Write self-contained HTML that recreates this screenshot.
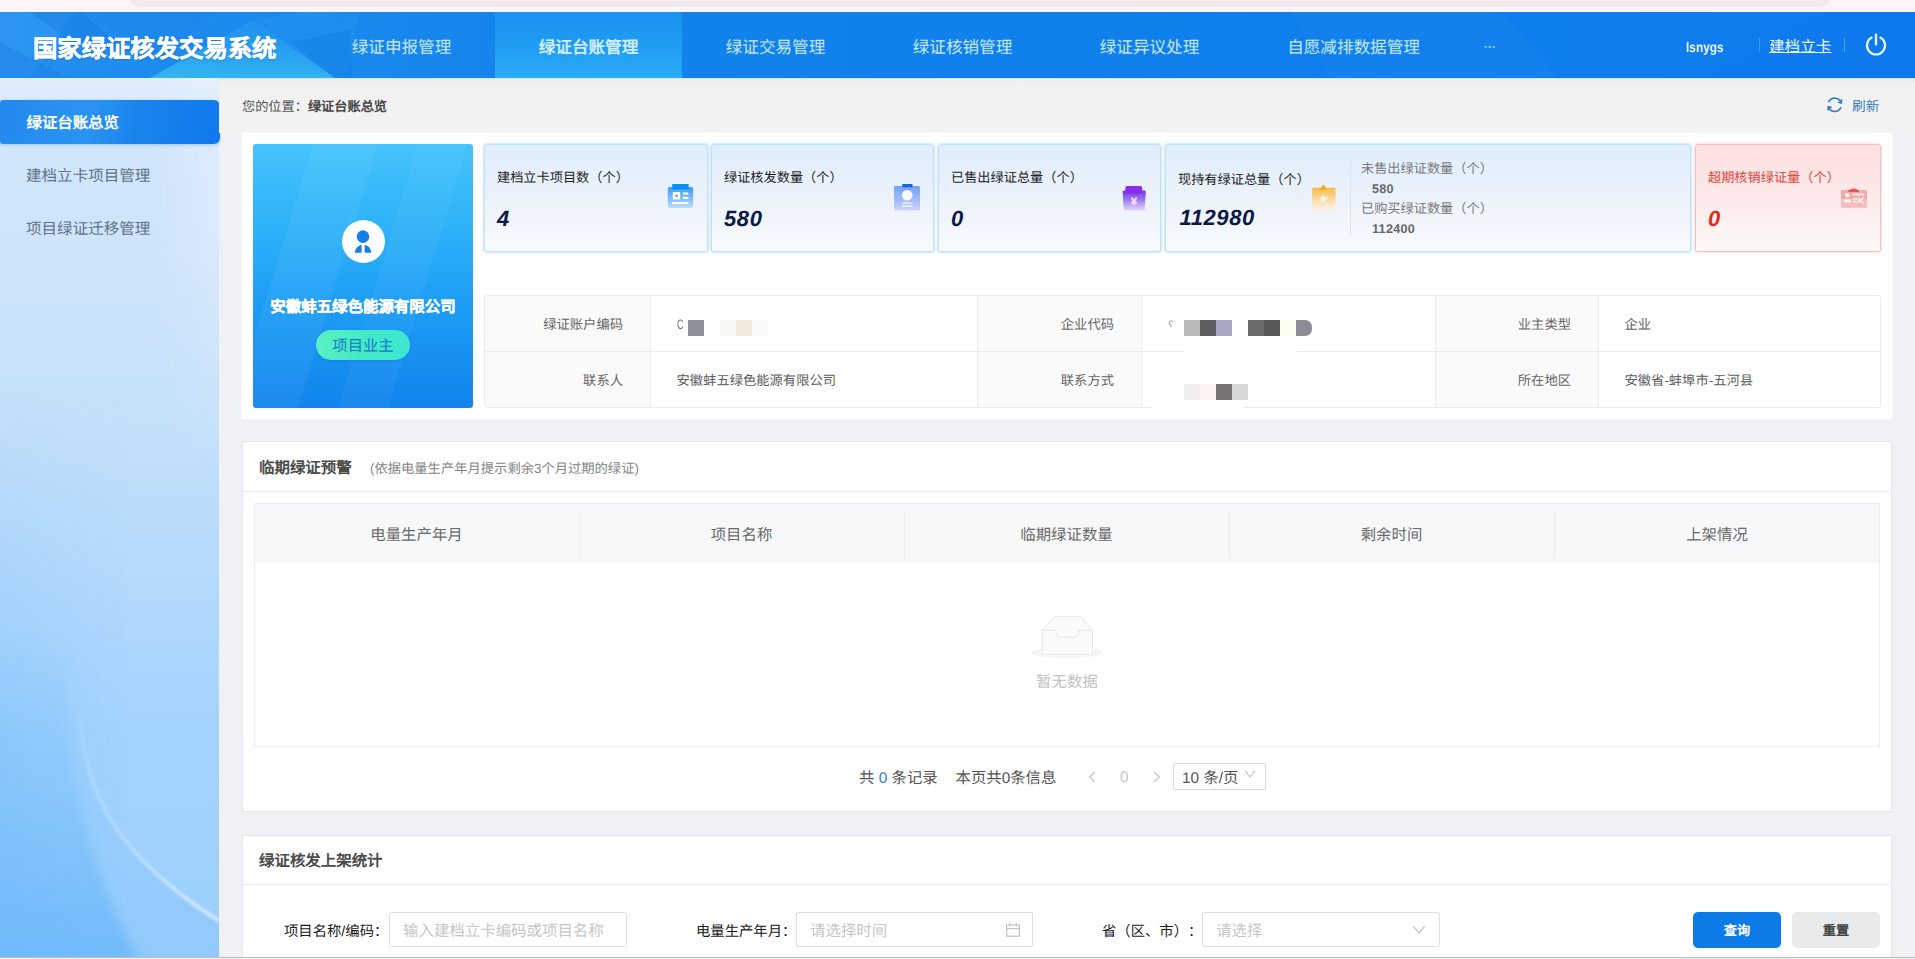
<!DOCTYPE html>
<html lang="zh-CN">
<head>
<meta charset="utf-8">
<title>国家绿证核发交易系统</title>
<style>
*{box-sizing:border-box;margin:0;padding:0}
html,body{width:1915px;height:959px;overflow:hidden}
body{font-family:"Liberation Sans",sans-serif;font-size:14px;color:#333;background:#f0f1f5;position:relative;text-rendering:geometricPrecision;text-spacing-trim:space-all;font-feature-settings:"chws" 0,"halt" 0}
.abs{position:absolute}
svg{position:absolute;overflow:visible}
/* top strip */
#topstrip{left:0;top:0;width:1915px;height:12px;background:#fbf5f7}
#topstrip i{position:absolute;left:129px;top:-6px;width:1702px;height:11px;background:#f3e9ed;border-radius:0 0 14px 14px;box-shadow:0 1px 2px rgba(200,180,190,.35)}
/* header */
#hdr{left:0;top:12px;width:1915px;height:66px;background:linear-gradient(90deg,#2390f0 0%,#1b89ee 14%,#1383ec 30%,#0f80ec 55%,#0e7bee 100%);overflow:hidden}
#hdrline{left:0;top:78px;width:1915px;height:1px;background:#d3e8fa}
#hdr .title{left:33px;top:2px;height:66px;line-height:71px;-webkit-text-stroke:.45px #fff;font-size:24.35px;font-weight:bold;color:#fff;white-space:nowrap;text-shadow:0 1px 2px rgba(0,70,150,.35)}
.nav{top:0;height:66px;line-height:72px;font-size:16.6px;color:#c6e9ff;text-align:center;white-space:nowrap}
.nav.act{background:linear-gradient(180deg,#1a92f1 0%,#1f9cf3 50%,#2cabf6 100%);color:#cfeeff;font-weight:bold}
.hr{top:0;height:66px;white-space:nowrap;color:#eef8ff}
/* sidebar */
#side{left:0;top:78px;width:219px;height:879px;background:linear-gradient(180deg,#d4e7fb 0%,#cfe4fa 20%,#c3e0fb 40%,#b2d9fc 58%,#a4d3fd 74%,#9ccffc 100%);overflow:hidden}
#side .glow{left:0;top:300px;width:219px;height:579px;background:linear-gradient(90deg,rgba(100,178,248,.22) 0%,rgba(110,184,250,.1) 35%,rgba(120,190,250,0) 60%);-webkit-mask-image:linear-gradient(180deg,transparent 0%,#000 60%);mask-image:linear-gradient(180deg,transparent 0%,#000 60%)}
#sact{left:0;top:100px;width:220px;height:44px;background:linear-gradient(100deg,#2189ee 0%,#2a93f2 40%,#1a84ee 62%,#0f78ec 100%);border-radius:3px 6px 6px 3px;color:#fff;font-weight:bold;font-size:15.4px;line-height:48px;padding-left:26.5px;white-space:nowrap;box-shadow:0 1px 3px rgba(30,120,220,.3)}
.sit{left:26px;font-size:15.55px;color:#5f7388;white-space:nowrap;line-height:20px}
.panel{background:#fff;border:1px solid #e3e6eb}
#bc{left:242px;top:99px;font-size:13.2px;color:#555;white-space:nowrap;line-height:16px}
#bc b{color:#484848}
#refresh{left:1852px;top:98.5px;font-size:13.7px;color:#3b7db6;line-height:16px;white-space:nowrap}
#p1{left:242px;top:132.5px;width:1650px;height:286px;background:#fff;box-shadow:0 0 2px rgba(255,255,255,.9)}
#band{left:219px;top:79px;width:1696px;height:54px;background:linear-gradient(180deg,#ececee 0,#f2f2f3 5px,#f2f2f3 100%)}
#bluecard{left:253px;top:144px;width:220px;height:264px;border-radius:3px;background:linear-gradient(180deg,#45c3fc 0%,#2fb3f9 30%,#1d9ef5 60%,#1184ee 100%);overflow:hidden}
#bluecard .av{left:88.7px;top:76.3px;width:43px;height:43px;border-radius:50%;background:#fdfeff}
#bluecard .nm{left:0;top:154px;width:220px;text-align:center;color:#fff;font-weight:bold;font-size:15.45px;line-height:20px;white-space:nowrap;-webkit-text-stroke:.3px #fff}
#bluecard .tag{left:63px;top:186px;width:94px;height:30px;border-radius:15px;background:linear-gradient(100deg,#5cf0c4 0%,#43eac4 50%,#3ee6d2 100%);color:#1577cc;font-size:15.35px;line-height:33px;text-align:center;box-shadow:0 1px 3px rgba(0,90,180,.25)}
.sc{top:144px;height:108px;border:1px solid #c4e1f3;border-radius:3px;background:linear-gradient(180deg,#dfeefc 0%,#e8f1fc 35%,#f0f4fc 65%,#f8fbfe 100%);box-shadow:0 0 2px 1px rgba(170,212,242,.55)}
.sc .lb{left:12px;top:24px;font-size:13.2px;color:#1e1e1e;white-space:nowrap;line-height:18px}
.sc .vl{left:12px;top:59px;font-size:22px;font-weight:bold;font-style:italic;color:#0c1a45;line-height:30px;white-space:nowrap;letter-spacing:.6px}
.sc.red{border-color:#f2c2c2;background:linear-gradient(180deg,#fddfe0 0%,#fde7e7 40%,#fef1f1 75%,#fff8f8 100%);box-shadow:0 0 2px 1px rgba(243,185,185,.45)}
.sc.red .lb{color:#dd473d}
.sc.red .vl{color:#dc2c20}
.sub{font-size:13.2px;color:#7a7a7a;white-space:nowrap;line-height:18px}
.subv{font-size:12.6px;color:#666;font-weight:bold;white-space:nowrap;line-height:18px;letter-spacing:.3px}
#vsep{left:1350px;top:160px;width:1px;height:75px;background:#dbe6ef}
#info{left:484px;top:295px;width:1397px;height:113px;border:1px solid #e9ebee;border-radius:3px;background:#fff;overflow:hidden}
#info .lab{background:#fafafa;color:#666;font-size:13.3px;text-align:right;padding-right:27px;height:56px;line-height:57px;white-space:nowrap;border-right:1px solid #ebedf0}
#info .val{color:#5e5e5e;font-size:13.3px;height:56px;line-height:57px;white-space:nowrap;padding-left:25.5px}
#info .hl{left:0;top:55px;width:1395px;height:1px;background:#e9ebee}
.mz{position:absolute}
#p2{left:242px;top:441px;width:1650px;height:371px}
#p3{left:242px;top:835px;width:1650px;height:130px}
.ptitle{font-size:15.45px;font-weight:bold;color:#4c4c4c;white-space:nowrap;line-height:20px}
.pnote{font-size:13.3px;color:#858585;white-space:nowrap;line-height:20px}
.hline{height:1px;background:#e9ebee}
#tbl{left:254px;top:503px;width:1626px;height:244px;border:1px solid #ebeef2;background:#fff}
#thead{left:255px;top:504px;width:1624px;height:59px;background:#f7f8fa}
.th{top:504px;height:59px;line-height:64px;text-align:center;font-size:15.4px;color:#6a6a6a;white-space:nowrap}
.vdiv{top:511px;width:1px;height:48px;background:#eceff3}
#nodata{left:1017px;top:674px;width:100px;text-align:center;font-size:15.45px;color:#c2c2c2;line-height:18px;white-space:nowrap}
.pg{top:769px;font-size:15.4px;color:#555;line-height:20px;white-space:nowrap}
#pgsel{left:1173px;top:763px;width:93px;height:27px;border:1px solid #d9d9d9;border-radius:2px;background:#fff;font-size:15.4px;color:#555;line-height:29px;padding-left:8px;white-space:nowrap}
.flab{top:922px;font-size:14.35px;color:#1a1a1a;line-height:20px;white-space:nowrap;font-weight:500}
.finp{top:912px;height:35px;width:238px;border:1px solid #dfdfdf;border-radius:2px;background:#fff;font-size:15.45px;color:#c6c6c6;line-height:37px;padding-left:13px;white-space:nowrap}
.btn{top:912px;width:88px;height:36px;border-radius:5px;font-size:13.2px;font-weight:bold;line-height:37px;text-align:center}
#botline{left:0;top:957px;width:1915px;height:2px;background:linear-gradient(180deg,#bcbec1 0,#bcbec1 1px,#f1f1f1 1px)}
</style>
</head>
<body>
<div id="topstrip" class="abs"><i></i></div>
<div id="hdr" class="abs">
  <svg width="1915" height="66" style="left:0;top:0" viewBox="0 0 1915 66">
    <defs><linearGradient id="hg1" x1="0" y1="0" x2="0" y2="1"><stop offset="0" stop-color="#2aa6f2" stop-opacity=".25"/><stop offset="1" stop-color="#3cc2f3" stop-opacity=".75"/></linearGradient></defs>
    <polygon points="0,0 75,0 30,66 0,66" fill="#3aa0f5" opacity=".4"/>
    <polygon points="30,0 80,0 130,40 70,30" fill="#0f70dc" opacity=".3"/>
    <polygon points="0,30 70,66 0,66" fill="#1478e0" opacity=".3"/>
    <polygon points="80,0 215,0 160,50" fill="#1a7fe6" opacity=".2"/>
    <polygon points="253,8 335,66 150,66" fill="url(#hg1)"/>
    <polygon points="253,8 300,0 360,0 345,66 335,66" fill="#2a9cf2" opacity=".3"/>
    <polygon points="290,30 350,18 352,66 335,66" fill="#0c72de" opacity=".28"/>
    <polygon points="352,0 440,0 400,66 346,66" fill="#1f8ef0" opacity=".2"/>
    <polygon points="1290,0 1500,0 1560,66 1330,66" fill="#1f8af0" opacity=".25"/>
    <polygon points="1830,0 1915,0 1915,66 1700,66" fill="#0a74ea" opacity=".25"/>
  </svg>
  <div class="abs title">国家绿证核发交易系统</div>
  <div class="abs nav" style="left:308px;width:187px">绿证申报管理</div>
  <div class="abs nav act" style="left:495px;width:187px">绿证台账管理</div>
  <div class="abs nav" style="left:682px;width:187px">绿证交易管理</div>
  <div class="abs nav" style="left:869px;width:187px">绿证核销管理</div>
  <div class="abs nav" style="left:1056px;width:187px">绿证异议处理</div>
  <div class="abs nav" style="left:1243px;width:221px">自愿减排数据管理</div>
  <div class="abs nav" style="left:1478px;width:24px;font-size:12px;font-weight:bold;line-height:70px;letter-spacing:0;color:#9fd6ff">···</div>
  <div class="abs hr" style="left:1686px;font-size:14px;line-height:71px;font-weight:bold;transform:scaleX(.85);transform-origin:0 50%">lsnygs</div>
  <div class="abs" style="left:1759px;top:26px;width:1px;height:14px;background:#3f9df3"></div>
  <div class="abs hr" style="left:1769px;font-size:15.6px;line-height:72px;text-decoration:underline;text-underline-offset:0px">建档立卡</div>
  <div class="abs" style="left:1844px;top:26px;width:1px;height:14px;background:#4aa5f4"></div>
  <svg width="24" height="24" style="left:1864px;top:21px" viewBox="0 0 24 24" fill="none" stroke="#e2f5ff" stroke-width="2.3" stroke-linecap="round">
    <path d="M7.6 4.6 A9 9 0 1 0 16.4 4.6"/>
    <path d="M12 1.6 V11.5"/>
  </svg>
</div>
<div id="hdrline" class="abs"></div>
<div id="side" class="abs">
  <div class="abs glow"></div>
  <div class="abs" style="left:0;top:0;width:219px;height:36px;background:linear-gradient(180deg,rgba(255,255,255,.32),rgba(255,255,255,0))"></div>
  <div class="abs" style="left:150px;top:0;width:69px;height:420px;background:linear-gradient(90deg,rgba(255,255,255,0),rgba(255,255,255,.22));-webkit-mask-image:linear-gradient(180deg,#000 40%,transparent);mask-image:linear-gradient(180deg,#000 40%,transparent)"></div>
  <svg width="219" height="879" style="left:0;top:0" viewBox="0 0 219 879" fill="none">
    <defs>
      <linearGradient id="arcg" x1="0" y1="0" x2="0" y2="1"><stop offset="0" stop-color="#fff" stop-opacity="0"/><stop offset=".35" stop-color="#fff" stop-opacity=".18"/><stop offset=".7" stop-color="#fff" stop-opacity=".3"/><stop offset="1" stop-color="#fff" stop-opacity=".75"/></linearGradient>
      <linearGradient id="arcf" x1="0" y1="0" x2="0" y2="1"><stop offset="0" stop-color="#7fc0fb" stop-opacity="0"/><stop offset=".5" stop-color="#7fc0fb" stop-opacity=".2"/><stop offset="1" stop-color="#7fc0fb" stop-opacity=".4"/></linearGradient>
      <linearGradient id="arcd" x1="0" y1="0" x2="0" y2="1"><stop offset="0" stop-color="#60b1f8" stop-opacity="0"/><stop offset=".45" stop-color="#62b6fa" stop-opacity=".25"/><stop offset="1" stop-color="#5cb3fa" stop-opacity=".6"/></linearGradient>
      <filter id="bl" x="-20%" y="-20%" width="140%" height="140%"><feGaussianBlur stdDeviation="1.4"/></filter>
      <filter id="bl2" x="-20%" y="-20%" width="140%" height="140%"><feGaussianBlur stdDeviation="5"/></filter>
    </defs>
    <path d="M80 620 C 78 715, 120 780, 219 843 L219 879 L0 879 L0 620 Z" fill="url(#arcf)"/>
    <path d="M66 560 C 62 690, 88 790, 142 889 L-10 889 L-10 560 Z" fill="url(#arcd)" filter="url(#bl2)"/>
    <path d="M80 620 C 78 715, 120 780, 219 843" stroke="url(#arcg)" stroke-width="3.2" filter="url(#bl)"/>
  </svg>
</div>
<div id="sact" class="abs">绿证台账总览</div>
<div class="abs sit" style="top:167px">建档立卡项目管理</div>
<div class="abs sit" style="top:220px">项目绿证迁移管理</div>
<div id="band" class="abs"></div>
<div id="bc" class="abs">您的位置：<b>绿证台账总览</b></div>
<svg width="17.6" height="17.6" style="left:1826.2px;top:95.5px" viewBox="0 0 16 16" fill="none" stroke="#3b7db6" stroke-width="1.5" stroke-linecap="round" stroke-linejoin="round">
  <path d="M13.9 6.2 A6.2 6.2 0 0 0 2.6 5.2"/>
  <path d="M2.1 9.8 A6.2 6.2 0 0 0 13.4 10.8"/>
  <path d="M14.2 3.6 L13.9 6.2 L11.4 5.7" />
  <path d="M1.8 12.4 L2.1 9.8 L4.6 10.3" />
</svg>
<div id="refresh" class="abs">刷新</div>
<div id="p1" class="abs"></div>
<div id="bluecard" class="abs">
  <svg width="220" height="264" style="left:0;top:0" viewBox="0 0 220 264">
    <polygon points="60,0 125,0 45,264 -20,264" fill="#fff" opacity=".05"/>
    <polygon points="165,0 215,0 135,264 85,264" fill="#fff" opacity=".04"/>
  </svg>
  <div class="abs av"></div>
  <svg width="44" height="44" style="left:88px;top:76px" viewBox="0 0 44 44">
    <circle cx="22" cy="16.6" r="6.3" fill="#1780e8"/>
    <path d="M13.9 32.8 C14.5 28 17 25.6 20.6 25.1 L20.6 32.8 Z" fill="#1780e8"/>
    <path d="M30.3 32.8 C29.7 28 27.2 25.6 23.6 25.1 L23.6 32.8 Z" fill="#1780e8"/>
  </svg>
  <div class="abs nm">安徽蚌五绿色能源有限公司</div>
  <div class="abs tag">项目业主</div>
</div>
<div class="abs sc" style="left:484px;width:224px"><div class="abs lb">建档立卡项目数（个）</div><div class="abs vl">4</div></div>
<div class="abs sc" style="left:711px;width:223px"><div class="abs lb">绿证核发数量（个）</div><div class="abs vl">580</div></div>
<div class="abs sc" style="left:938px;width:223px"><div class="abs lb">已售出绿证总量（个）</div><div class="abs vl">0</div></div>
<div class="abs sc" style="left:1165px;width:526px">
  <div class="abs lb" style="top:26px">现持有绿证总量（个）</div><div class="abs vl" style="top:58px;left:13.5px">112980</div>
  <div class="abs sub" style="left:195px;top:15px">未售出绿证数量（个）</div>
  <div class="abs subv" style="left:206px;top:35px">580</div>
  <div class="abs sub" style="left:195px;top:55px">已购买绿证数量（个）</div>
  <div class="abs subv" style="left:206px;top:75px">112400</div>
</div>
<div class="abs sc red" style="left:1695px;width:186px"><div class="abs lb" style="left:12px">超期核销绿证量（个）</div><div class="abs vl" style="left:12px">0</div></div>
<div id="vsep" class="abs"></div>
<!-- stat icons -->
<svg width="30" height="30" style="left:666px;top:182px" viewBox="0 0 30 30">
  <defs><linearGradient id="g1" x1="0" y1="0" x2="0" y2="1"><stop offset="0" stop-color="#3a9ff0"/><stop offset=".6" stop-color="#86c1f7"/><stop offset="1" stop-color="#c2dcfb"/></linearGradient></defs>
  <rect x="1.8" y="5" width="25.4" height="21" rx="2" fill="url(#g1)"/>
  <rect x="6.2" y="2" width="16.4" height="5.5" fill="#0d8fef"/>
  <rect x="6.8" y="10" width="7.4" height="7.4" fill="#fff"/><rect x="9.6" y="12.8" width="1.9" height="1.9" fill="#3d7bc0"/>
  <rect x="17" y="10.4" width="5.3" height="2.2" fill="#fff"/><rect x="17" y="14.8" width="5.3" height="2.2" fill="#fff"/>
  <rect x="6" y="20" width="16.4" height="2" fill="#fff" opacity=".95"/>
</svg>
<svg width="30" height="30" style="left:892px;top:182px" viewBox="0 0 30 30">
  <defs><linearGradient id="g2" x1="0" y1="0" x2="0" y2="1"><stop offset="0" stop-color="#76a2f4"/><stop offset=".6" stop-color="#a5bdf7"/><stop offset="1" stop-color="#ccd5fb"/></linearGradient></defs>
  <rect x="2" y="4" width="26" height="24.6" rx="1.5" fill="url(#g2)"/>
  <rect x="10.2" y="2" width="10.3" height="3.2" rx=".6" fill="#1765d8"/>
  <circle cx="15.2" cy="13.3" r="5.3" fill="#fafbff"/>
  <rect x="10" y="20.4" width="10.5" height="1.3" fill="#f1f4ff"/><rect x="10" y="23.3" width="10.5" height="1.6" fill="#f1f4ff"/>
</svg>
<svg width="30" height="30" style="left:1120px;top:184px" viewBox="0 0 30 30">
  <defs><linearGradient id="g3" x1="0" y1="0" x2="0" y2="1"><stop offset="0" stop-color="#7437e6"/><stop offset=".45" stop-color="#9a78f0"/><stop offset="1" stop-color="#dccffc" stop-opacity=".85"/></linearGradient></defs>
  <path d="M2.6 8.5 Q2.2 6.6 4 6.6 L24.4 6.6 Q26.2 6.6 25.8 8.5 L24.6 25 Q24.5 26.6 23 26.6 L5.4 26.6 Q3.9 26.6 3.8 25 Z" fill="url(#g3)"/>
  <rect x="5.3" y="2" width="17" height="7.4" rx="2" fill="#8a2be8"/>
  <text x="13.8" y="21.2" font-size="10.5" font-weight="bold" fill="#fbd9fb" stroke="#fbd9fb" stroke-width=".5" text-anchor="middle" font-family="Liberation Sans, sans-serif">¥</text>
</svg>
<svg width="30" height="32" style="left:1310px;top:182px" viewBox="0 0 30 32">
  <defs><linearGradient id="g4" x1="0" y1="0" x2="0" y2="1"><stop offset="0" stop-color="#f8bd45"/><stop offset=".45" stop-color="#fbd79a"/><stop offset="1" stop-color="#fdeedd" stop-opacity=".6"/></linearGradient></defs>
  <rect x="2.2" y="5.8" width="23.4" height="23.4" rx="1" fill="url(#g4)"/>
  <polygon points="13.4,2.6 17.6,7.8 9.2,7.8" fill="#f9a726"/>
  <polygon points="13.4,11.8 14.8,15 18.3,15.3 15.6,17.6 16.5,21 13.4,19.1 10.3,21 11.2,17.6 8.5,15.3 12,15" fill="#fff5dc"/>
</svg>
<svg width="30" height="24" style="left:1840px;top:187px" viewBox="0 0 30 24">
  <rect x="1" y="3" width="26" height="17.5" rx="1" fill="#f3aaaa"/>
  <rect x="1" y="12" width="26" height="8.5" fill="#f7c4c4" opacity=".7"/>
  <path d="M8.4 3.6 Q13.5 -.8 19 3.6 L19 5 L8.4 5 Z" fill="#ef4f5a"/>
  <circle cx="7.3" cy="8.3" r="2.3" fill="#fdeeee"/><rect x="3.6" y="12.2" width="7.6" height="3.4" rx="1.2" fill="#fdeeee"/>
  <rect x="12.6" y="6.6" width="11.6" height="1.8" fill="#fdeeee"/><rect x="13" y="11" width="4.2" height="1.6" fill="#fdeeee"/><rect x="13" y="14" width="4.2" height="1.6" fill="#fdeeee"/>
  <path d="M19 10.6 V16 M23.6 10.6 L20 13.4 L23.8 16" stroke="#fdeeee" stroke-width="1.6" fill="none"/>
</svg>
<div id="info" class="abs">
  <div class="abs lab" style="left:0;top:0;width:166px">绿证账户编码</div>
  <div class="abs lab" style="left:492px;top:0;width:165px;border-left:1px solid #ebedf0">企业代码</div>
  <div class="abs lab" style="left:950px;top:0;width:164px;border-left:1px solid #ebedf0">业主类型</div>
  <div class="abs val" style="left:1114px;top:0">企业</div>
  <div class="abs lab" style="left:0;top:56px;width:166px;height:55px;line-height:58px">联系人</div>
  <div class="abs val" style="left:166px;top:56px;height:55px;line-height:58px">安徽蚌五绿色能源有限公司</div>
  <div class="abs lab" style="left:492px;top:56px;width:165px;height:55px;line-height:58px;border-left:1px solid #ebedf0">联系方式</div>
  <div class="abs lab" style="left:950px;top:56px;width:164px;height:55px;line-height:58px;border-left:1px solid #ebedf0">所在地区</div>
  <div class="abs val" style="left:1114px;top:56px;height:55px;line-height:58px">安徽省-蚌埠市-五河县</div>
  <div class="abs hl"></div>
</div>
<!-- mosaic blocks -->
<div class="mz" style="left:677px;top:318px;font-size:13.5px;color:#777;line-height:13px;transform:scaleX(.68);transform-origin:0 0">C</div>
<div class="mz" style="left:688px;top:320px;width:16px;height:16px;background:#8d9099"></div>
<div class="mz" style="left:720px;top:320px;width:16px;height:16px;background:#f6f8f3"></div>
<div class="mz" style="left:736px;top:320px;width:16px;height:16px;background:#f3ecdc"></div>
<div class="mz" style="left:752px;top:320px;width:16px;height:16px;background:#f8fbfa"></div>
<div class="mz" style="left:1168.5px;top:320px;font-size:9px;color:#888;line-height:9px">ʕ</div>
<div class="mz" style="left:1184px;top:320px;width:16px;height:16px;background:#b9b9b9"></div>
<div class="mz" style="left:1200px;top:320px;width:16px;height:16px;background:#5f5f62"></div>
<div class="mz" style="left:1216px;top:320px;width:16px;height:16px;background:#a7a7c2"></div>
<div class="mz" style="left:1248px;top:320px;width:16px;height:16px;background:#6b6e6a"></div>
<div class="mz" style="left:1264px;top:320px;width:16px;height:16px;background:#5b585b"></div>
<div class="mz" style="left:1280px;top:320px;width:16px;height:16px;background:#fdfdf0"></div>
<div class="mz" style="left:1296px;top:320px;width:16px;height:16px;background:#8d8b96;border-radius:0 7px 7px 0"></div>
<div class="mz" style="left:1184px;top:384px;width:16px;height:16px;background:#f1eeee"></div>
<div class="mz" style="left:1200px;top:384px;width:16px;height:16px;background:#fdf3f3"></div>
<div class="mz" style="left:1216px;top:384px;width:16px;height:16px;background:#777376"></div>
<div class="mz" style="left:1232px;top:384px;width:16px;height:16px;background:#d9d8d6"></div>

<div class="mz" style="left:1185px;top:344px;width:112px;height:14px;background:#fff"></div>
<div class="mz" style="left:1153px;top:400px;width:90px;height:9px;background:#fff"></div>
<div id="p2" class="abs panel"></div>
<div class="abs ptitle" style="left:259px;top:459px">临期绿证预警</div>
<div class="abs pnote" style="left:370px;top:459px">(依据电量生产年月提示剩余3个月过期的绿证)</div>
<div class="abs hline" style="left:243px;top:491px;width:1646px"></div>
<div id="tbl" class="abs"></div>
<div id="thead" class="abs"></div>
<div class="abs th" style="left:254px;width:325px">电量生产年月</div>
<div class="abs th" style="left:579px;width:325px">项目名称</div>
<div class="abs th" style="left:904px;width:325px">临期绿证数量</div>
<div class="abs th" style="left:1229px;width:325px">剩余时间</div>
<div class="abs th" style="left:1554px;width:326px">上架情况</div>
<div class="abs vdiv" style="left:579px"></div><div class="abs vdiv" style="left:904px"></div><div class="abs vdiv" style="left:1229px"></div><div class="abs vdiv" style="left:1554px"></div>
<svg width="80" height="48" style="left:1027px;top:612px" viewBox="0 0 80 48" fill="none">
  <ellipse cx="39.5" cy="40.5" rx="36" ry="5.5" fill="#f5f5f5"/>
  <path d="M15 18.2 L28 4.4 H53 L65.5 18.2 V40.7 Q65.5 42.7 63.5 42.7 H17 Q15 42.7 15 40.7 Z" fill="#fafafa" stroke="#e8e8e8" stroke-width="1"/>
  <path d="M15 18.2 H29 V21.5 Q29 25 32.5 25 H48 Q51.4 25 51.4 21.5 V18.2 H65.5" stroke="#e6e6e6" stroke-width="1" fill="#fcfcfc"/>
</svg>
<div id="nodata" class="abs">暂无数据</div>
<div class="abs pg" style="left:859px">共 <span style="color:#2e7fc9">0</span> 条记录</div>
<div class="abs pg" style="left:955.5px">本页共0条信息</div>
<svg width="10" height="14" style="left:1087px;top:770px" viewBox="0 0 10 14" fill="none" stroke="#c7c7c7" stroke-width="1.3"><path d="M7.8 2 L2.6 7 L7.8 12"/></svg>
<div class="abs pg" style="left:1120px;top:768px;color:#c4c4c4">0</div>
<svg width="10" height="14" style="left:1152px;top:770px" viewBox="0 0 10 14" fill="none" stroke="#c7c7c7" stroke-width="1.3"><path d="M2.2 2 L7.4 7 L2.2 12"/></svg>
<div id="pgsel" class="abs">10 条/页</div>
<svg width="12" height="10" style="left:1244px;top:769px" viewBox="0 0 12 10" fill="none" stroke="#c2c2c2" stroke-width="1.2"><path d="M1.2 1.5 L6 8 L10.8 1.5"/></svg>

<div id="p3" class="abs panel"></div>
<div class="abs ptitle" style="left:259px;top:852px">绿证核发上架统计</div>
<div class="abs hline" style="left:243px;top:884px;width:1646px"></div>
<div class="abs flab" style="left:284px">项目名称/编码：</div>
<div class="abs finp" style="left:389px">输入建档立卡编码或项目名称</div>
<div class="abs flab" style="left:696px">电量生产年月：</div>
<div class="abs finp" style="left:796px;width:237px">请选择时间</div>
<svg width="16" height="16" style="left:1005px;top:922px" viewBox="0 0 16 16" fill="none" stroke="#c4c4c4" stroke-width="1.2"><rect x="1.6" y="3" width="12.8" height="11.2"/><path d="M1.6 6.6 H14.4 M4.8 1 V4.2 M11.2 1 V4.2"/></svg>
<div class="abs flab" style="left:1102px">省（区、市）：</div>
<div class="abs finp" style="left:1202px">请选择</div>
<svg width="14" height="10" style="left:1412px;top:925px" viewBox="0 0 14 10" fill="none" stroke="#c2c2c2" stroke-width="1.3"><path d="M1.5 1.5 L7 8 L12.5 1.5"/></svg>
<div class="abs btn" style="left:1693px;background:#0c7be8;color:#fff">查询</div>
<div class="abs btn" style="left:1792px;background:#e9eaeb;color:#444">重置</div>
<div id="botline" class="abs"></div>
</body>
</html>
